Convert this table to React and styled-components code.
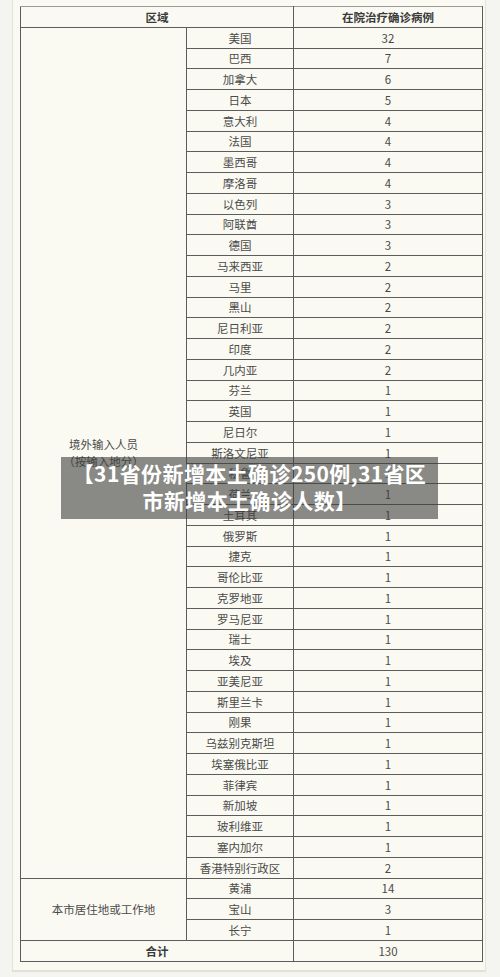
import React from "react";
import styled, { createGlobalStyle } from "styled-components";

const Global = createGlobalStyle`
  html, body { margin: 0; padding: 0; background: #f4f4f1; }
  body { font-family: "Noto Sans CJK SC", "Noto Sans", sans-serif; }
`;

const Page = styled.div`
  width: 500px;
  height: 977px;
  overflow: hidden;
  background: #f4f4f1;
`;

const Panel = styled.div`
  position: relative;
  margin-left: 12px;
  width: 474px;
  height: 972px;
  box-sizing: border-box;
  padding: 6px 0 0 7px;
  background: #fafaf3;
  border-left: 1px solid #e3e3de;
  border-right: 1px solid #e3e3de;
  border-bottom: 2px solid #e1e1dc;
`;

const Table = styled.table`
  border-collapse: collapse;
  table-layout: fixed;
  width: 462px;
  color: #474747;
  font-size: 11.5px;
`;

const Cell = styled.td`
  border: 1px solid #5c5c5c;
  height: 19.76px;
  padding: 0;
  text-align: center;
  vertical-align: middle;
  line-height: 16px;
  font-weight: ${(p) => (p.$bold ? 700 : 400)};
  color: ${(p) => (p.$bold ? "#3a3a3a" : "#4a4a4a")};
  white-space: nowrap;
`;

const HeadRow = styled.tr`
  td { border-top-color: #9a9a9a; }
`;

const GroupLabel = styled.div`
  line-height: 17px;
`;

const Overlay = styled.div`
  position: absolute;
  left: 48px;
  top: 457px;
  width: 377px;
  height: 62px;
  box-sizing: border-box;
  padding-top: 3px;
  background: rgba(62, 62, 60, 0.6);
  color: #ffffff;
  font-family: "Noto Sans CJK SC", "Noto Sans", sans-serif;
  font-weight: 700;
  font-size: 21px;
  line-height: 27px;
  text-align: center;
  letter-spacing: 0.4px;
`;

const abroad = [
  ["美国", 32], ["巴西", 7], ["加拿大", 6], ["日本", 5], ["意大利", 4],
  ["法国", 4], ["墨西哥", 4], ["摩洛哥", 4], ["以色列", 3], ["阿联酋", 3],
  ["德国", 3], ["马来西亚", 2], ["马里", 2], ["黑山", 2], ["尼日利亚", 2],
  ["印度", 2], ["几内亚", 2], ["芬兰", 1], ["英国", 1], ["尼日尔", 1],
  ["斯洛文尼亚", 1], ["秘鲁", 1], ["荷兰", 1], ["土耳其", 1], ["俄罗斯", 1],
  ["捷克", 1], ["哥伦比亚", 1], ["克罗地亚", 1], ["罗马尼亚", 1], ["瑞士", 1],
  ["埃及", 1], ["亚美尼亚", 1], ["斯里兰卡", 1], ["刚果", 1], ["乌兹别克斯坦", 1],
  ["埃塞俄比亚", 1], ["菲律宾", 1], ["新加坡", 1], ["玻利维亚", 1], ["塞内加尔", 1],
  ["香港特别行政区", 2],
];

const local = [["黄浦", 14], ["宝山", 3], ["长宁", 1]];

export default function App() {
  return (
    <Page>
      <Global />
      <Panel>
        <Table>
          <colgroup>
            <col style={{ width: 166 }} />
            <col style={{ width: 107 }} />
            <col style={{ width: 189 }} />
          </colgroup>
          <tbody>
            <HeadRow>
              <Cell colSpan={2} $bold>区域</Cell>
              <Cell $bold>在院治疗确诊病例</Cell>
            </HeadRow>
            {abroad.map(([name, n], i) => (
              <tr key={name}>
                {i === 0 && (
                  <Cell rowSpan={abroad.length}>
                    <GroupLabel>境外输入人员</GroupLabel>
                    <GroupLabel>（按输入地分）</GroupLabel>
                  </Cell>
                )}
                <Cell>{name}</Cell>
                <Cell>{n}</Cell>
              </tr>
            ))}
            {local.map(([name, n], i) => (
              <tr key={name}>
                {i === 0 && <Cell rowSpan={local.length}>本市居住地或工作地</Cell>}
                <Cell>{name}</Cell>
                <Cell>{n}</Cell>
              </tr>
            ))}
            <tr>
              <Cell colSpan={2} $bold>合计</Cell>
              <Cell>130</Cell>
            </tr>
          </tbody>
        </Table>
        <Overlay>
          <div>【31省份新增本土确诊250例,31省区</div>
          <div>市新增本土确诊人数】</div>
        </Overlay>
      </Panel>
    </Page>
  );
}
